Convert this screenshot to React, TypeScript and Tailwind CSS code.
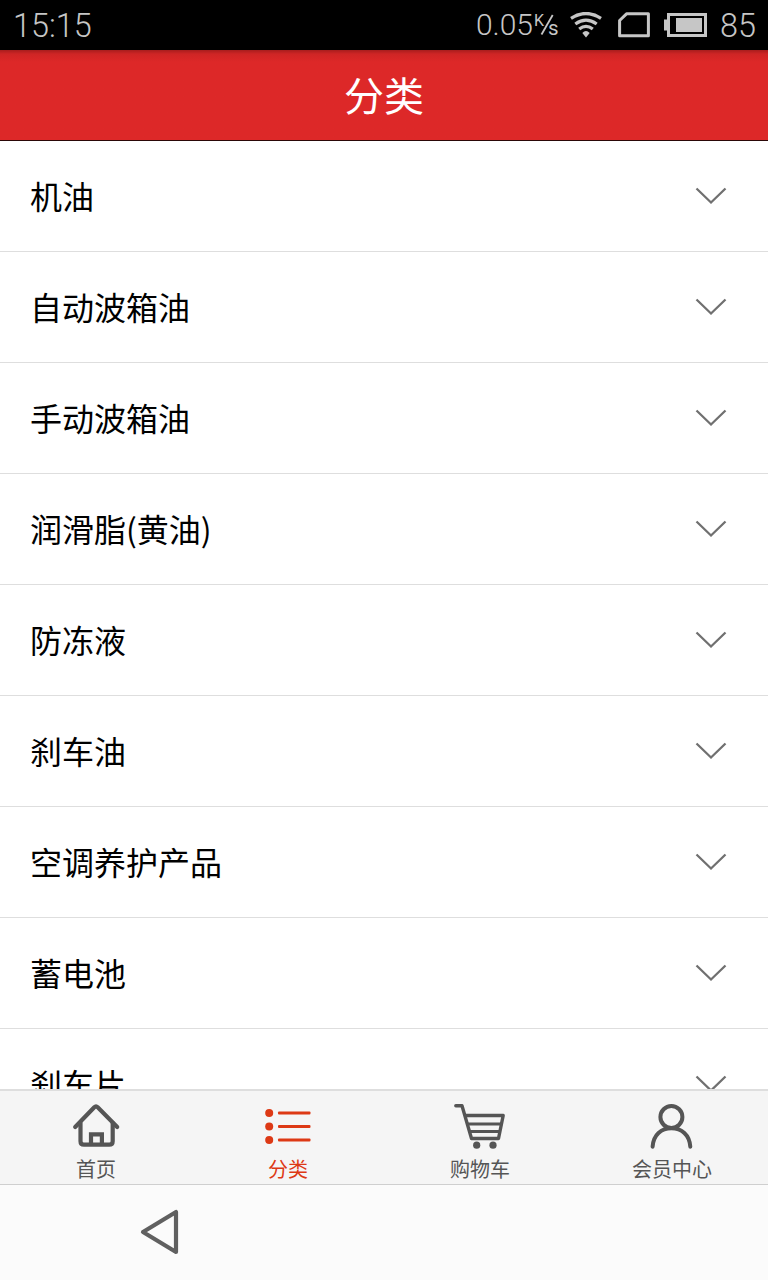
import * as React from "react";
import { clsx } from "clsx";

const categories = [
  "机油",
  "自动波箱油",
  "手动波箱油",
  "润滑脂(黄油)",
  "防冻液",
  "刹车油",
  "空调养护产品",
  "蓄电池",
  "刹车片",
];

function StatusBar() {
  return (
    <div className="flex h-[50px] shrink-0 items-center bg-black pr-3 pl-[13px] font-['Roboto',sans-serif] font-light text-[#c6c6c6]">
      <span className="w-[90px] pt-[2px] text-[32.4px] leading-none whitespace-nowrap">15:15</span>
      <div className="ml-auto flex items-center">
        <span className="text-[30px] leading-none whitespace-nowrap">0.05</span>
        <svg className="ml-px h-[28px] w-[26px] overflow-visible" viewBox="0 0 26 28" fill="none">
          <path d="M18.7 4 7.5 23.5" stroke="currentColor" strokeWidth="1.8" />
          <text x="0" y="15" fontSize="16" fill="currentColor" className="font-normal">K</text>
          <text x="14" y="24" fontSize="20.5" fill="currentColor" className="font-normal">s</text>
        </svg>
        <svg className="ml-[10px] h-[26px] w-[32px]" viewBox="0 0 32 26" fill="none" stroke="currentColor">
          <path d="M1 6.3Q16-3.3 31 6.3" strokeWidth="3.3" />
          <path d="M5.3 12Q16 4.3 26.7 12" strokeWidth="3.2" />
          <path d="M9.2 17Q16 11.6 22.8 17" strokeWidth="3.2" />
          <path d="M12.3 21Q16 17.2 19.7 21L16 25.5Z" fill="currentColor" stroke="none" />
        </svg>
        <svg className="ml-4 h-[26px] w-[32px]" viewBox="0 0 32 26" fill="none">
          <path d="M8.5 1.8H30.4V23.8H1.6V8.5Z" stroke="currentColor" strokeWidth="3" strokeLinejoin="round" />
        </svg>
        <svg className="ml-[14px] h-[26px] w-[43px]" viewBox="0 0 43 26" fill="none">
          <path d="M0 7.5h4v11H0z" fill="currentColor" />
          <path d="M4.5 2.5h37v21h-37z" stroke="currentColor" strokeWidth="3" />
          <path d="M12 6h26v14H12z" fill="currentColor" />
        </svg>
        <span className="ml-[13px] w-[36px] pt-[2px] text-[32.4px] leading-none">85</span>
      </div>
    </div>
  );
}

function CategoryRow({ label }: { label: string }) {
  return (
    <li className="flex h-[111px] shrink-0 items-center justify-between border-b border-[#dedede] pr-[41px] pl-[30px]">
      <span className="pb-[2px] text-[32px] leading-[48px] text-black">{label}</span>
      <svg className="h-[18px] w-[32px]" viewBox="0 0 32 18" fill="none">
        <path d="M1.5 1.5 16 15.5 30.5 1.5" stroke="#707070" strokeWidth="2.3" />
      </svg>
    </li>
  );
}

function HomeIcon() {
  return (
    <svg className="h-[50px] w-[50px]" viewBox="0 0 50 50" fill="none" stroke="currentColor" strokeWidth="4.2" strokeLinecap="round" strokeLinejoin="round">
      <path d="M4.2 27 23.3 7.3Q25 5.6 26.7 7.3L46.2 27" />
      <path d="M9.5 23V41.2Q9.5 44.7 13 44.7H38.2Q41.7 44.7 41.7 41.2V23" />
      <path d="M20 43.5V34.3H30.9V43.5" strokeLinejoin="miter" />
    </svg>
  );
}

function ListIcon() {
  return (
    <svg className="h-[50px] w-[50px]" viewBox="0 0 50 50" fill="currentColor">
      {[13, 26.5, 40].map((y) => (
        <React.Fragment key={y}>
          <circle cx="6.2" cy={y} r="4" />
          <rect x="15" y={y - 1.4} width="32.5" height="3" rx="1" />
        </React.Fragment>
      ))}
    </svg>
  );
}

function CartIcon() {
  return (
    <svg className="h-[50px] w-[52px]" viewBox="0 0 52 50" fill="none" stroke="currentColor" strokeWidth="3.4" strokeLinecap="round" strokeLinejoin="round">
      <path d="M1.8 5.8H8L17.5 38.5H44.5L49.2 15.5H11" />
      <path d="M14 24H47M16 31.5H45.5" strokeWidth="3" />
      <circle cx="22.7" cy="45.2" r="3.6" fill="currentColor" stroke="none" />
      <circle cx="39" cy="45.2" r="3.6" fill="currentColor" stroke="none" />
    </svg>
  );
}

function UserIcon() {
  return (
    <svg className="h-[50px] w-[50px]" viewBox="0 0 50 50" fill="none" stroke="currentColor" strokeWidth="4" strokeLinecap="round">
      <circle cx="24.4" cy="17" r="11" />
      <path d="M5.6 46.7C6.4 34.7 14.3 28.3 24.4 28.3S42.5 34.7 43.3 46.7" />
    </svg>
  );
}

const tabs = [
  { label: "首页", icon: <HomeIcon />, active: false },
  { label: "分类", icon: <ListIcon />, active: true },
  { label: "购物车", icon: <CartIcon />, active: false },
  { label: "会员中心", icon: <UserIcon />, active: false },
];

function TabBar() {
  return (
    <nav className="grid h-[96px] shrink-0 grid-cols-4 border-t-2 border-b border-t-[#dedede] border-b-[#cfcfcf] bg-[#f5f5f5]">
      {tabs.map((tab) => (
        <div
          key={tab.label}
          className={clsx(
            "flex flex-col items-center pt-[9px]",
            tab.active ? "text-[#dd3915]" : "text-[#555555]"
          )}
        >
          {tab.icon}
          <span className="mt-[5px] text-[20px] leading-[27px]">{tab.label}</span>
        </div>
      ))}
    </nav>
  );
}

export default function App() {
  return (
    <div className="flex h-[1280px] w-[768px] flex-col overflow-hidden bg-white font-['Noto_Sans_CJK_SC',sans-serif]">
      <StatusBar />
      <header className="flex h-[91px] shrink-0 items-center justify-center border-b border-[#2b0808] bg-[#dd2828] bg-linear-to-b from-[#a81d1d] via-[#cf2525] via-[4px] to-[#dd2828] to-[12px]">
        <h1 className="pb-[3px] text-[40px] leading-[60px] text-white">分类</h1>
      </header>
      <ul className="flex min-h-0 flex-1 flex-col overflow-hidden">
        {categories.map((label) => (
          <CategoryRow key={label} label={label} />
        ))}
      </ul>
      <TabBar />
      <div className="flex h-[95px] shrink-0 items-center bg-[#fbfbfb] pb-px pl-[140px]">
        <svg className="h-[46px] w-[40px]" viewBox="0 0 40 46" fill="none">
          <path d="M36 3V43L3 23Z" stroke="#606060" strokeWidth="4.2" strokeLinejoin="round" />
        </svg>
      </div>
    </div>
  );
}
